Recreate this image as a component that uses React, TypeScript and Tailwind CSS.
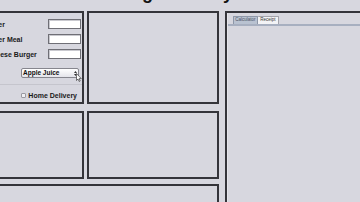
import React from 'react';

function Panel({ className = '', children }: { className?: string; children?: React.ReactNode }) {
  return (
    <div className={`border-2 border-[#34343a] bg-[#d7d7df] ${className}`}>
      {children}
    </div>
  );
}

function ItemRow({ label, pad }: { label: string; pad: string }) {
  return (
    <div className="flex items-center justify-between h-[10px]">
      <span className={`${pad} whitespace-nowrap text-[7px] font-bold text-[#1a1a1a] leading-none`}>{label}</span>
      <div className="w-[33px] h-[10px] mr-[1px] bg-white border border-[#6f6f76] shadow-[inset_1px_1px_0_#c9c9cf]" />
    </div>
  );
}

export default function App() {
  return (
    <div className="w-[360px] h-[202px] overflow-hidden bg-[#d7d7df] font-['Liberation_Sans',Arial,sans-serif]">
      {/* title, only the descenders show */}
      <div className="h-[11px] overflow-hidden">
        <div className="-mt-[16px] -ml-[3px] whitespace-nowrap text-[18px] leading-[18px] font-bold text-[#111]">
          Restaurant Management System
        </div>
      </div>

      <div className="flex gap-[6px] -ml-[32px]">
        <div className="flex flex-col w-[251px] shrink-0">
          <div className="flex gap-[3px] h-[93px]">
            <Panel className="w-[116px] shrink-0">
              <div className="flex flex-col pt-[6px]">
                <div className="flex flex-col gap-[5px]">
                  <ItemRow label="Burger" pad="pl-[12px]" />
                  <ItemRow label="Burger Meal" pad="pl-[12px]" />
                  <ItemRow label="Cheese Burger" pad="pl-[17px]" />
                </div>

                <div className="flex justify-end mt-[9px]">
                  <div className="relative flex items-center w-[58px] h-[10px] mr-[3px] rounded-[2px] border border-[#86868e] bg-gradient-to-b from-white to-[#e4e4ea]">
                    <span className="flex-1 pl-[1px] text-[6.5px] font-bold leading-none text-[#111]">Apple Juice</span>
                    <div className="flex flex-col items-center justify-center gap-[1px] w-[5px] h-full">
                      <svg width="3" height="2" viewBox="0 0 3 2"><path d="M0 2 L1.5 0 L3 2Z" fill="#333" /></svg>
                      <svg width="3" height="2" viewBox="0 0 3 2"><path d="M0 0 L1.5 2 L3 0Z" fill="#333" /></svg>
                    </div>
                    <svg className="absolute left-[54px] top-[4px]" width="6" height="9" viewBox="0 0 6 9">
                      <path d="M0.5 0.5 L0.5 7.5 L2 6 L3.2 8.5 L4.2 8 L3.1 5.6 L5.3 5.6 Z" fill="#fff" stroke="#222" strokeWidth="0.6" />
                    </svg>
                  </div>
                </div>

                <div className="mt-[6px] h-px bg-[#c5c5cd]" />

                <div className="flex items-center justify-end gap-[2px] mt-[6px] mr-[5px] h-[8px]">
                  <div className="w-[5px] h-[5px] rounded-[1px] border border-[#9a9aa2] bg-[#f0f0f4]" />
                  <span className="text-[7px] font-bold leading-none text-[#1a1a1a]">Home Delivery</span>
                </div>
              </div>
            </Panel>
            <Panel className="flex-1" />
          </div>

          <div className="flex gap-[3px] h-[68px] mt-[7px]">
            <Panel className="w-[116px] shrink-0" />
            <Panel className="flex-1" />
          </div>

          <Panel className="h-[40px] mt-[5px]" />
        </div>

        <div className="w-[150px] h-[200px] shrink-0 border-l-2 border-t-2 border-[#34343a] bg-[#d7d7df]">
          <div className="h-full border-l border-[#e4e4ea]">
            <div className="flex pl-[5px] pt-[3px]">
              <div className="flex items-center justify-center w-[25px] h-[8px] rounded-t-[1px] border border-b-0 border-[#8e97a8] bg-[#b9c2d1] text-[4.5px] leading-none text-[#4b5262]">
                Calculator
              </div>
              <div className="flex items-center justify-center w-[21px] h-[8px] rounded-t-[1px] border border-b-0 border-l-0 border-[#a3a3ab] bg-[#f3f3f6] text-[4.5px] leading-none text-[#333]">
                Receipt
              </div>
            </div>
            <div className="h-[2px] bg-[#a7afc0]" />
          </div>
        </div>
      </div>
    </div>
  );
}
